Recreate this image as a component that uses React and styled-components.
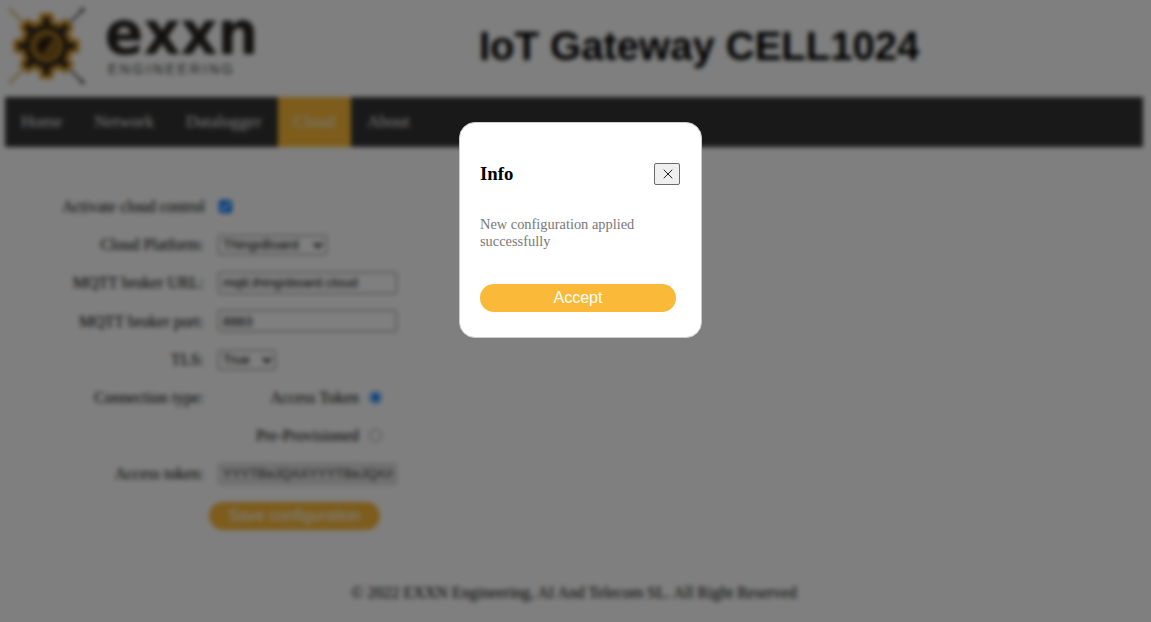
import React from "react";
import styled, { createGlobalStyle } from "styled-components";
import { X } from "lucide-react";

const GlobalStyle = createGlobalStyle`
  * { box-sizing: border-box; }
  body {
    margin: 0;
    background: #fff;
    color: #000;
    font-family: "Liberation Serif", "Times New Roman", serif;
    font-size: 16px;
    overflow: hidden;
  }
`;

const Page = styled.div`
  height: 622px;
  padding: 0 8px 0 5px;
  display: flex;
  flex-direction: column;
`;

const Header = styled.header`
  height: 97px;
  display: flex;
`;

const LogoArt = styled.svg`
  width: 260px;
  height: 97px;
  flex: none;
  overflow: visible;
`;

const Title = styled.h1`
  margin: 23px 0 0 214px;
  font: bold 40px/46px "Liberation Sans", Arial, sans-serif;
  white-space: nowrap;
`;

const Nav = styled.nav`
  height: 50px;
  display: flex;
  background: #333;
`;

const NavLink = styled.a`
  padding: 15px 16px;
  font-size: 17px;
  line-height: 20px;
  color: #f2f2f2;
  background: ${(p) => (p.$active ? "#fab939" : "transparent")};
`;

const Form = styled.form`
  width: 400px;
  padding-top: 41px;
  display: flex;
  flex-direction: column;
`;

const Row = styled.div`
  height: ${(p) => p.$height || 38}px;
  display: flex;
  align-items: center;
`;

const Label = styled.label`
  width: ${(p) => p.$width || 199}px;
  margin-right: 14px;
  text-align: right;
  white-space: nowrap;
`;

const TextInput = styled.input`
  width: 179px;
  height: 22px;
  margin-bottom: 1px;
  padding: 1px 3px;
  font: 13.333px "Liberation Sans", Arial, sans-serif;

  &:disabled {
    color: #333;
    background: #e6e6e6;
    border: 2px solid #cfcfcf;
  }
`;

const Select = styled.select`
  width: ${(p) => p.$width}px;
  height: 20px;
  margin-bottom: 1px;
  font: 13.333px "Liberation Sans", Arial, sans-serif;
`;

const Check = styled.input`
  width: 13px;
  height: 13px;
  margin: 0 0 2px;
`;

const OptionLabel = styled.label`
  width: 141px;
  margin-right: 10px;
  text-align: right;
`;

const Pill = styled.button`
  width: ${(p) => p.$width}px;
  height: 28px;
  padding: 0;
  border: 0;
  border-radius: 16px;
  background: #fab939;
  color: #fff;
  font: 16px "Liberation Sans", Arial, sans-serif;
`;

const SaveBar = styled.div`
  padding: 9px 0 0 204px;
`;

const Footer = styled.footer`
  margin-top: 54px;
  text-align: center;
  line-height: 18px;
`;

const Overlay = styled.div`
  position: fixed;
  inset: 0;
  background: rgba(0, 0, 0, 0.5);
  backdrop-filter: blur(2.5px);
`;

const Dialog = styled.section`
  position: fixed;
  top: 122px;
  left: 459px;
  width: 243px;
  height: 216px;
  padding: 40px 21px 0 20px;
  border: 1px solid #ccc;
  border-radius: 16px;
  background: #fff;
`;

const DialogHeader = styled.div`
  height: 22px;
  display: flex;
  align-items: center;
  justify-content: space-between;
`;

const DialogTitle = styled.h3`
  margin: 0;
  font-size: 18.72px;
  line-height: 22px;
`;

const CloseButton = styled.button`
  width: 26px;
  height: 22px;
  padding: 0 0 0 2px;
  display: flex;
  align-items: center;
  justify-content: center;
  border: 1px solid #6b6b6b;
  border-radius: 2px;
  background: #efefef;
  color: #000;
`;

const Message = styled.p`
  margin: 31px 0 34px;
  font-size: 14.4px;
  line-height: 17px;
  color: #777;
`;

const teeth = [0, 45, 90, 135, 180, 225, 270, 315];

function Gear({ color, body, tip, half }) {
  return (
    <g fill={color}>
      <circle r={body} />
      {teeth.map((a) => (
        <rect key={a} x={-half} y={-tip} width={half * 2} height={tip} rx="1.5" transform={`rotate(${a})`} />
      ))}
    </g>
  );
}

function Logo() {
  return (
    <LogoArt viewBox="5 0 260 97">
      <g transform="translate(46.5 46)">
        <g strokeWidth="1.8" fill="none">
          <path d="M-37-37 0 0-37 37" stroke="#c9a040" />
          <path d="M37-37 0 0 37 37" stroke="#444" />
        </g>
        <g fill="#c9a040"><circle cx="-36" cy="-36" r="1.6" /><circle cx="-36" cy="36" r="1.6" /></g>
        <g fill="#444"><circle cx="36" cy="-36" r="2.2" /><circle cx="36" cy="36" r="2.2" /></g>
        <Gear color="#d99b2b" body={27} tip={33} half={7} />
        <Gear color="#33281b" body={22} tip={29} half={3.5} />
        <circle r="14.5" fill="#7a5718" stroke="#b88222" strokeWidth="3" />
        <path d="M-9 2C-8-6-2-10 7-9L1 0-4 8Z" fill="#241b12" />
        <path d="M-4 8 8-6C10 3 4 9-4 8Z" fill="#8f651d" />
      </g>
      <text x="104.5" y="54" fontFamily="DejaVu Sans, sans-serif" fontWeight="bold" fontSize="60" textLength="154" lengthAdjust="spacingAndGlyphs" fill="#252220">exxn</text>
      <text x="108" y="73.5" fontFamily="Liberation Sans, Arial, sans-serif" fontSize="14" textLength="125" fill="#3c3c3c">ENGINEERING</text>
    </LogoArt>
  );
}

const links = ["Home", "Network", "Datalogger", "Cloud", "About"];

export default function App() {
  return (
    <>
      <GlobalStyle />
      <Page>
        <Header>
          <Logo />
          <Title>IoT Gateway CELL1024</Title>
        </Header>
        <Nav>
          {links.map((name) => (
            <NavLink key={name} $active={name === "Cloud"}>{name}</NavLink>
          ))}
        </Nav>
        <Form>
          <Row>
            <Label $width={200}>Activate cloud control</Label>
            <Check type="checkbox" defaultChecked />
          </Row>
          <Row>
            <Label>Cloud Platform:</Label>
            <Select $width={109}><option>ThingsBoard</option></Select>
          </Row>
          <Row>
            <Label>MQTT broker URL:</Label>
            <TextInput defaultValue="mqtt.thingsboard.cloud" />
          </Row>
          <Row $height={39}>
            <Label>MQTT broker port:</Label>
            <TextInput defaultValue="8883" />
          </Row>
          <Row>
            <Label>TLS:</Label>
            <Select $width={58}><option>True</option></Select>
          </Row>
          <Row>
            <Label>Connection type:</Label>
            <OptionLabel>Access Token</OptionLabel>
            <Check type="radio" name="connection" defaultChecked />
          </Row>
          <Row>
            <Label />
            <OptionLabel>Pre-Provisioned</OptionLabel>
            <Check type="radio" name="connection" />
          </Row>
          <Row>
            <Label>Access token:</Label>
            <TextInput disabled defaultValue="YYYTBeJQAXYYYTBeJQAX" />
          </Row>
          <SaveBar>
            <Pill type="button" $width={171}>Save configuration</Pill>
          </SaveBar>
        </Form>
        <Footer>© 2022 EXXN Engineering, AI And Telecom SL. All Right Reserved</Footer>
      </Page>
      <Overlay />
      <Dialog role="dialog">
        <DialogHeader>
          <DialogTitle>Info</DialogTitle>
          <CloseButton aria-label="Close"><X size={16} strokeWidth={1.3} /></CloseButton>
        </DialogHeader>
        <Message>New configuration applied successfully</Message>
        <Pill $width={196}>Accept</Pill>
      </Dialog>
    </>
  );
}
